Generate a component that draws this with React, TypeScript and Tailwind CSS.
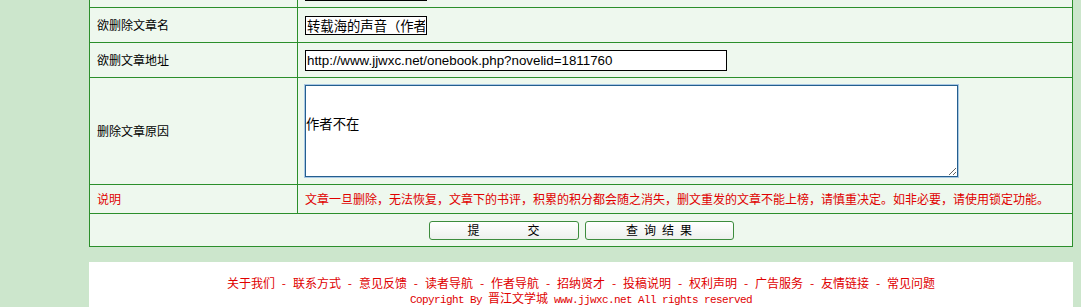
const line = "border-[#2b8f2b]"

export default function App() {
  return (
    <div className="h-[307px] overflow-hidden bg-[#cce6cc] font-['Noto_Sans_CJK_SC',sans-serif] text-[12px] text-black">
      <div className="-mt-[27px] ml-[89px] w-[984px] border-x border-b border-[#2b8f2b] bg-[#eef8ee]">
        {/* row cut off at top */}
        <div className={`flex h-[35px] border-b ${line}`}>
          <div className={`w-[208px] border-r ${line} px-[7px] flex items-center`}></div>
          <div className="flex-1 px-[7px] flex items-center">
            <input readOnly defaultValue="" className="w-[122px] h-[21px] border border-black bg-white outline-none" />
          </div>
        </div>

        <div className={`flex h-[35px] border-b ${line}`}>
          <div className={`w-[208px] border-r ${line} px-[7px] flex items-center`}>欲删除文章名</div>
          <div className="flex-1 px-[7px] flex items-center">
            <input
              readOnly
              defaultValue="转载海的声音（作者："
              className="w-[122px] h-[19px] border border-black bg-white px-px text-[13.33px] leading-[17px] outline-none font-['Noto_Sans_CJK_SC',sans-serif]"
            />
          </div>
        </div>

        <div className={`flex h-[35px] border-b ${line}`}>
          <div className={`w-[208px] border-r ${line} px-[7px] flex items-center`}>欲删文章地址</div>
          <div className="flex-1 px-[7px] flex items-center">
            <input
              readOnly
              defaultValue="http://www.jjwxc.net/onebook.php?novelid=1811760"
              className="w-[422px] h-[21px] border border-black bg-white px-px text-[13.33px] outline-none font-['Liberation_Sans',Arial,sans-serif]"
            />
          </div>
        </div>

        <div className={`flex h-[107px] border-b ${line}`}>
          <div className={`w-[208px] border-r ${line} px-[7px] flex items-center`}>删除文章原因</div>
          <div className="flex-1 px-[7px] flex items-center">
            <textarea
              defaultValue={"\n\n作者不在"}
              className="w-[653px] h-[92px] border border-[#245f8e] bg-white px-0 py-0 text-[13.33px] leading-[15px] outline-none shadow-[0_0_0_1px_#a9c8e4] font-['Noto_Sans_CJK_SC',sans-serif]"
            />
          </div>
        </div>

        <div className={`flex h-[29px] border-b ${line} text-[#e00000]`}>
          <div className={`w-[208px] border-r ${line} px-[7px] flex items-center`}>说明</div>
          <div className="flex-1 px-[7px] flex items-center whitespace-nowrap">
            文章一旦删除，无法恢复，文章下的书评，积累的积分都会随之消失，删文重发的文章不能上榜，请慎重决定。如非必要，请使用锁定功能。
          </div>
        </div>

        <div className="flex h-[32px] items-center justify-center gap-[6px]">
          <button className="w-[150px] h-[19px] rounded-[3px] border border-[#3d8c3d] bg-gradient-to-b from-white to-[#edf0ed] flex items-center justify-center gap-[48px] leading-none">
            <span>提</span>
            <span>交</span>
          </button>
          <button className="w-[149px] h-[19px] rounded-[3px] border border-[#3d8c3d] bg-gradient-to-b from-white to-[#edf0ed] flex items-center justify-center gap-[6px] leading-none">
            <span>查</span>
            <span>询</span>
            <span>结</span>
            <span>果</span>
          </button>
        </div>
      </div>

      <div className="mt-[15px] ml-[89px] w-[984px] bg-white pt-[13px] pb-4 text-center leading-[15px] text-[#e00000]">
        <div className="whitespace-nowrap">
          {["关于我们", "联系方式", "意见反馈", "读者导航", "作者导航", "招纳贤才", "投稿说明", "权利声明", "广告服务", "友情链接", "常见问题"].map((t, i) => (
            <span key={t}>
              {i > 0 && <span className="inline-block w-[18px] text-center">-</span>}
              {t}
            </span>
          ))}
        </div>
        <div className="whitespace-nowrap">
          <span className="font-['Liberation_Mono',monospace] text-[11px] tracking-[-0.6px]">Copyright By </span>
          晋江文学城
          <span className="font-['Liberation_Mono',monospace] text-[11px] tracking-[-0.6px]"> www.jjwxc.net All rights reserved</span>
        </div>
        <div className="pl-[54px]">京ICP证</div>
      </div>
    </div>
  )
}
